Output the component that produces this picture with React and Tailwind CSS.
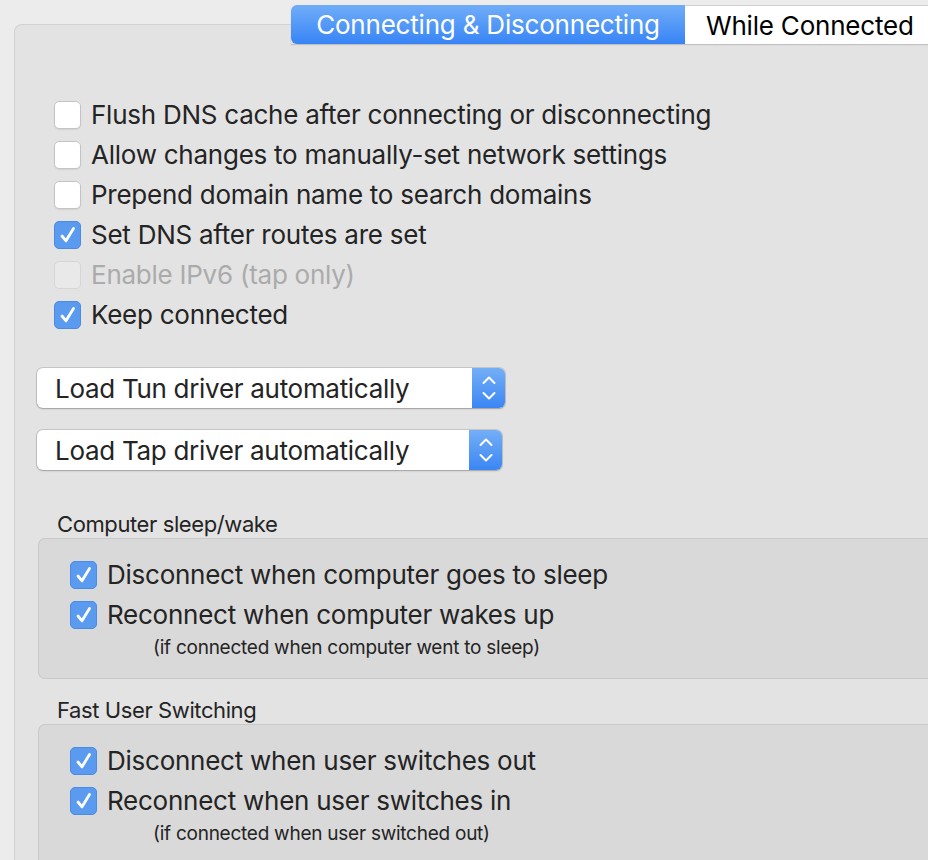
import React from "react";

const font = { fontFamily: "Inter, 'Noto Sans', sans-serif" };

const Check = ({ checked, disabled, label }) => (
  <div className="flex items-center h-[40px] gap-[10px]">
    <div
      className={
        "w-[27px] h-[28px] rounded-[5px] flex items-center justify-center " +
        (checked
          ? "bg-[#5a9bef] border border-[#4a8be4]"
          : disabled
          ? "bg-[#e9e9e9] border border-[#d6d6d6]"
          : "bg-white border border-[#c4c4c4] shadow-[0_1px_1px_rgba(0,0,0,0.08)]")
      }
    >
      {checked && (
        <svg width="22" height="22" viewBox="0 0 22 22">
          <path d="M5 12 L9 16.8 L16.5 4.5" fill="none" stroke="#fff" strokeWidth="2.8" strokeLinecap="round" strokeLinejoin="round" />
        </svg>
      )}
    </div>
    <span className={"text-[26px] tracking-[-0.25px] leading-none " + (disabled ? "text-[#ababab]" : "text-[#242424]")}>
      {label}
    </span>
  </div>
);

const Popup = ({ label, width }) => (
  <div
    className="flex h-[40px] rounded-[6px] bg-white shadow-[0_0_0_1px_rgba(0,0,0,0.12),0_1px_2px_rgba(0,0,0,0.2)] overflow-hidden"
    style={{ width }}
  >
    <div className="flex-1 flex items-center pl-[18px] text-[26px] tracking-[-0.3px] text-[#242424]">{label}</div>
    <div className="w-[33px] bg-gradient-to-b from-[#74aef6] to-[#3a86f4] flex items-center justify-center">
      <svg width="18" height="30" viewBox="0 0 18 30">
        <path d="M3.5 10 L9 4.5 L14.5 10" fill="none" stroke="#fff" strokeWidth="2" strokeLinecap="round" strokeLinejoin="round" />
        <path d="M3.5 20 L9 25.5 L14.5 20" fill="none" stroke="#fff" strokeWidth="2" strokeLinecap="round" strokeLinejoin="round" />
      </svg>
    </div>
  </div>
);

const Group = ({ title, items, note, last }) => (
  <div className="flex flex-col">
    <div className="pl-[42px] h-[28px] flex items-center text-[22px] tracking-[-0.4px] text-[#242424]">{title}</div>
    <div
      className={
        "ml-[23px] bg-[#d9d9d9] border border-[#c9c9c9] border-r-0 rounded-l-[7px] pt-[16px] pl-[31px] " +
        (last ? "pb-[40px] border-b-0 rounded-bl-none" : "pb-[17px]")
      }
    >
      {items.map((t) => (
        <Check key={t} checked label={t} />
      ))}
      <div className="pl-[83px] h-[26px] flex items-center text-[19px] tracking-[-0.25px] text-[#242424]">{note}</div>
    </div>
  </div>
);

export default function App() {
  return (
    <div className="relative w-[928px] h-[860px] bg-[#ececec] overflow-hidden pt-[24px] pl-[14px]" style={font}>
      <div className="h-full bg-[#e3e3e3] border border-[#d2d2d2] border-r-0 border-b-0 rounded-tl-[8px] flex flex-col">
        <div className="pt-[70px] pl-[39px] flex flex-col">
          <Check label="Flush DNS cache after connecting or disconnecting" />
          <Check label="Allow changes to manually-set network settings" />
          <Check label="Prepend domain name to search domains" />
          <Check checked label="Set DNS after routes are set" />
          <Check disabled label="Enable IPv6 (tap only)" />
          <Check checked label="Keep connected" />
        </div>
        <div className="pl-[22px] pt-[33px] flex flex-col gap-[22px]">
          <Popup label="Load Tun driver automatically" width={468} />
          <Popup label="Load Tap driver automatically" width={465} />
        </div>
        <div className="pt-[40px] flex flex-col gap-[17px]">
          <Group
            title="Computer sleep/wake"
            items={["Disconnect when computer goes to sleep", "Reconnect when computer wakes up"]}
            note="(if connected when computer went to sleep)"
          />
          <Group
            last
            title="Fast User Switching"
            items={["Disconnect when user switches out", "Reconnect when user switches in"]}
            note="(if connected when user switched out)"
          />
        </div>
      </div>

      <div className="absolute top-[5px] left-[291px] flex h-[39px] shadow-[0_1px_1px_rgba(0,0,0,0.15)]">
        <div className="w-[394px] rounded-l-[6px] bg-gradient-to-b from-[#70adf8] to-[#3784f6] flex items-center justify-center text-white text-[26px] tracking-[-0.2px]">
          Connecting &amp; Disconnecting
        </div>
        <div className="w-[260px] bg-white border-t border-[#cfcfcf] flex items-center pl-[21px] text-black text-[26px] tracking-[-0.2px]">
          While Connected
        </div>
      </div>
    </div>
  );
}
